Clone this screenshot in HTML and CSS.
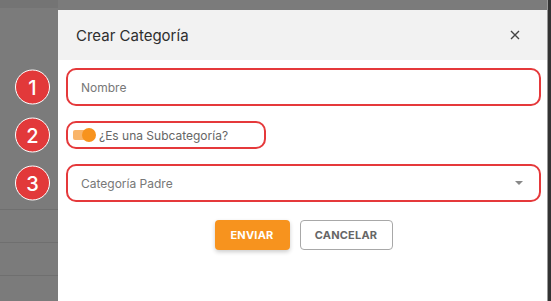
FILE: index.html
```html
<!DOCTYPE html>
<html>
<head>
<meta charset="utf-8">
<title>Crear Categoría</title>
<link rel="stylesheet" href="styles.css">
</head>
<body>
<div class="screen">
  <div class="backdrop">
    <div class="backdrop-row"></div>
    <div class="backdrop-row"></div>
    <div class="backdrop-row"></div>
  </div>
  <div class="modal">
    <div class="modal-header">
      <span class="modal-title">Crear Categoría</span>
      <svg class="modal-close" width="10" height="10" viewBox="0 0 10 10">
        <path d="M1 1 L9 9 M9 1 L1 9" stroke="#444" stroke-width="1.4" fill="none"/>
      </svg>
    </div>
    <div class="modal-body">
      <div class="field field-wide">
        <span class="badge">1</span>
        <span class="placeholder">Nombre</span>
      </div>
      <div class="field field-toggle">
        <span class="badge">2</span>
        <span class="toggle"><span class="toggle-knob"></span></span>
        <span class="toggle-label">¿Es una Subcategoría?</span>
      </div>
      <div class="field field-wide field-select">
        <span class="badge">3</span>
        <span class="placeholder">Categoría Padre</span>
        <span class="caret"></span>
      </div>
      <div class="actions">
        <button class="btn btn-primary">ENVIAR</button>
        <button class="btn btn-outline">CANCELAR</button>
      </div>
    </div>
  </div>
  <div class="edge"></div>
</div>
</body>
</html>
```
FILE: styles.css
```css
body {
  margin: 0;
  font-family: Inter, "Noto Sans", sans-serif;
  background: #7b7b7b;
}
.screen {
  display: flex;
  width: 551px;
  height: 301px;
  overflow: hidden;
  background: #7b7b7b;
}
.backdrop {
  width: 58px;
  flex-shrink: 0;
  padding-top: 201px;
  box-sizing: border-box;
  border-top: 8px solid #747474;
}
.backdrop-row {
  height: 32px;
  border-top: 1px solid #6f6f6f;
}
.modal {
  width: 489px;
  margin-top: 10px;
  background: #fff;
  display: flex;
  flex-direction: column;
}
.modal-header {
  height: 50px;
  background: #f2f2f2;
  display: flex;
  align-items: center;
  justify-content: space-between;
  padding: 0 27px 0 18px;
}
.modal-title {
  font-size: 15px;
  color: #2e2e2e;
}
.modal-body {
  padding: 8px 6px 0 8px;
  display: flex;
  flex-direction: column;
  gap: 15px;
}
.field {
  position: relative;
  display: flex;
  align-items: center;
  border: 2.5px solid #e5393b;
  border-radius: 10px;
  box-sizing: border-box;
}
.field-wide {
  height: 38px;
  padding: 0 13px;
}
.field-toggle {
  width: 200px;
  height: 28px;
  padding: 0 5px;
  gap: 4px;
}
.field-select {
  justify-content: space-between;
  padding-right: 16px;
}
.placeholder {
  font-size: 12px;
  color: #777;
}
.caret {
  width: 0;
  height: 0;
  border-left: 4px solid transparent;
  border-right: 4px solid transparent;
  border-top: 4px solid #888;
}
.toggle {
  position: relative;
  width: 22px;
  height: 10px;
  border-radius: 2px 5px 5px 2px;
  background: #f9b56a;
}
.toggle-knob {
  position: absolute;
  right: -1px;
  top: -2px;
  width: 14px;
  height: 14px;
  border-radius: 50%;
  background: #f7931e;
}
.toggle-label {
  font-size: 12px;
  color: #666;
}
.badge {
  position: absolute;
  left: -53px;
  top: 50%;
  transform: translateY(-50%);
  width: 33px;
  height: 33px;
  border-radius: 50%;
  background: #e2393a;
  border: 1.5px solid #fff;
  color: #fff;
  font-size: 20px;
  font-weight: 500;
  display: flex;
  align-items: center;
  justify-content: center;
}
.actions {
  display: flex;
  justify-content: center;
  gap: 10px;
  margin-top: 3px;
}
.btn {
  height: 30px;
  border-radius: 4px;
  font-family: Inter, "Noto Sans", sans-serif;
  font-size: 11px;
  font-weight: 700;
  letter-spacing: 0.2px;
  cursor: pointer;
}
.btn-primary {
  width: 75px;
  border: none;
  background: #f7931e;
  color: #fff;
  box-shadow: 0 2px 4px rgba(0,0,0,0.2);
}
.btn-outline {
  width: 93px;
  border: 1px solid #a8a8a8;
  background: #fff;
  color: #666;
}
.edge {
  flex: 1;
  background: #333;
  border-left: 1px solid #999;
}
```
